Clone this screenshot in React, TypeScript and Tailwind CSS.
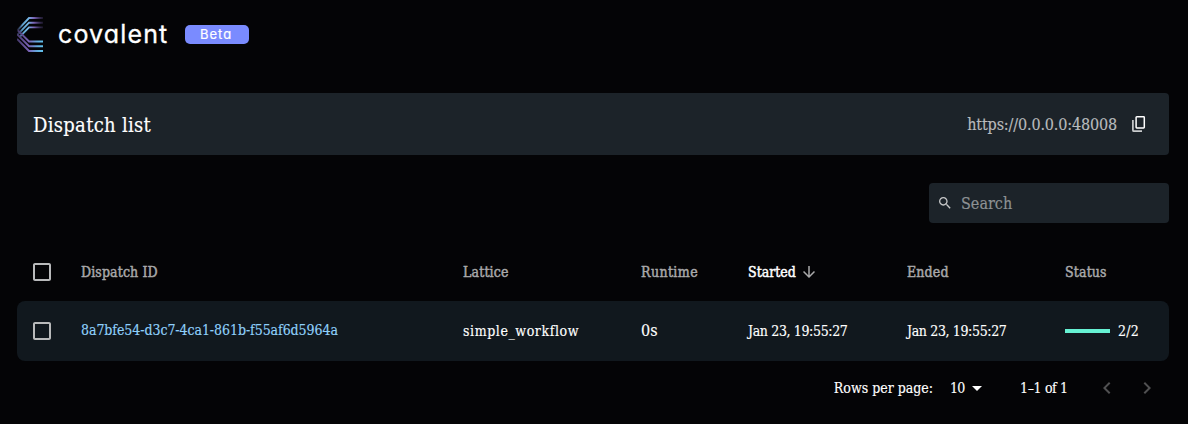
import React from "react";

const slab = "font-['Roboto_Slab','DejaVu_Serif_Condensed','DejaVu_Serif',serif]";

const columns = "grid grid-cols-[64px_382px_178px_107px_159px_158px_104px] items-center";

function Checkbox() {
  return (
    <svg viewBox="0 0 24 24" className="ml-[13px] size-6 fill-[#b9babb]">
      <path d="M19 5v14H5V5h14m0-2H5c-1.1 0-2 .9-2 2v14c0 1.1.9 2 2 2h14c1.1 0 2-.9 2-2V5c0-1.1-.9-2-2-2z" />
    </svg>
  );
}

function Icon({ path, className }: { path: string; className: string }) {
  return (
    <svg viewBox="0 0 24 24" className={`shrink-0 ${className}`}>
      <path d={path} />
    </svg>
  );
}

function Logo() {
  return (
    <svg width="26" height="36" viewBox="0 0 26 36" fill="none" strokeWidth="1.9">
      <defs>
        <linearGradient id="top" gradientUnits="userSpaceOnUse" x1="0" y1="0" x2="26" y2="0">
          <stop offset="0" stopColor="#4a4a78" stopOpacity=".4" />
          <stop offset=".2" stopColor="#5b9cc8" />
          <stop offset=".42" stopColor="#74bbe8" />
          <stop offset=".65" stopColor="#7c62b6" />
          <stop offset="1" stopColor="#4a3d70" stopOpacity=".35" />
        </linearGradient>
        <linearGradient id="bottom" gradientUnits="userSpaceOnUse" x1="0" y1="0" x2="26" y2="0">
          <stop offset="0" stopColor="#44386a" />
          <stop offset=".45" stopColor="#7a62b6" />
          <stop offset=".8" stopColor="#62b0e0" />
          <stop offset="1" stopColor="#62c0ec" />
        </linearGradient>
      </defs>
      <g stroke="url(#top)">
        <path d="M0 14.500 12 2H26" />
        <path d="M0 19 12 6.700H26" />
        <path d="M3 20.500 12 11.400H26" />
      </g>
      <g stroke="url(#bottom)">
        <path d="M1 14.500 12 25.500H26" />
        <path d="M0 18.200 12 30.200H26" />
        <path d="M0 23 12 35H26" />
      </g>
    </svg>
  );
}

export default function App() {
  return (
    <div className={`h-[424px] w-[1188px] overflow-hidden bg-[#040406] text-sm whitespace-nowrap text-white [-webkit-text-stroke:0.15px] ${slab}`}>
      <header className="flex h-[93px] items-start pt-[16px] pl-[17px] font-['Inter',sans-serif] [font-feature-settings:'cv11']">
        <Logo />
        <span className="ml-[15px] w-[127px] text-[25px] leading-[36px] tracking-[1.15px] [-webkit-text-stroke:0.3px]">covalent</span>
        <span className="mt-[9px] h-[19px] w-[64px] rounded-[5px] bg-[#7a8bff] pl-[15px] text-[13px] leading-[19px] tracking-[1px] [-webkit-text-stroke:0.2px]">Beta</span>
      </header>

      <main className="ml-[17px] w-[1152px]">
        <section className="flex h-[62px] items-center rounded bg-[#1c2329] pr-[22px] pl-4">
          <h1 className="pt-0.5 text-[20px] tracking-[0.3px]">Dispatch list</h1>
          <span className="ml-auto pt-0.5 text-[16px] tracking-[-0.15px] text-[#b9bbbd]">https://0.0.0.0:48008</span>
          <svg viewBox="0 0 16 18" className="ml-[14px] h-[18px] w-4" fill="none">
            <path d="M1.900 5v10.200q0 1 1 1H11" stroke="#c9cbcd" strokeWidth="1.700" />
            <rect x="5.100" y="1.800" width="8.200" height="11.200" rx=".7" stroke="#fff" strokeWidth="1.500" />
          </svg>
        </section>

        <div className="mt-7 ml-auto flex h-10 w-60 items-center rounded bg-[#1c2329] pl-2 text-[16px] text-[#8d9194]">
          <Icon
            className="mr-2 size-4 fill-[#c5c6c7]"
            path="M15.500 14h-.79l-.28-.27C15.410 12.590 16 11.110 16 9.500 16 5.910 13.090 3 9.500 3S3 5.910 3 9.500 5.910 16 9.500 16c1.610 0 3.090-.59 4.230-1.570l.27.28v.79l5 4.990L20.490 19l-4.990-5zm-6 0C7.010 14 5 11.990 5 9.500S7.010 5 9.500 5 14 7.010 14 9.500 11.990 14 9.500 14z"
          />
          <span className="pt-0.5">Search</span>
        </div>

        <div className={`mt-5 h-[58px] text-[#a9a9aa] [-webkit-text-stroke:0.45px] ${columns}`}>
          <Checkbox />
          <span className="tracking-[0.12px]">Dispatch ID</span>
          <span className="tracking-[0.15px]">Lattice</span>
          <span className="tracking-[0.4px]">Runtime</span>
          <span className="flex items-center gap-1 text-white">
            Started
            <Icon className="size-[18px] fill-[#a9a9aa]" path="M20 12l-1.410-1.410L13 16.170V4h-2v12.170l-5.580-5.590L4 12l8 8 8-8z" />
          </span>
          <span className="tracking-[0.15px]">Ended</span>
          <span className="tracking-[0.15px]">Status</span>
        </div>
        <div className={`h-[60px] rounded-lg bg-[#11181e] ${columns}`}>
          <Checkbox />
          <span className="pb-0.5 tracking-[-0.06px] text-[#8fd0fb]">8a7bfe54-d3c7-4ca1-861b-f55af6d5964a</span>
          <span className="tracking-[0.58px]">simple_workflow</span>
          <span className="text-[16px]">0s</span>
          <span className="tracking-[-0.36px]">Jan 23, 19:55:27</span>
          <span className="tracking-[-0.36px]">Jan 23, 19:55:27</span>
          <span className="flex items-center gap-2 tracking-[0.3px]">
            <i className="h-1 w-[45px] bg-[#66f1d3]" />
            2/2
          </span>
        </div>
        <footer className="flex h-[54px] items-center justify-end pr-[10px]">
          <span>Rows per page:</span>
          <span className="ml-[17px] w-[15px] tracking-[-0.8px]">10</span>
          <Icon className="size-6 fill-white" path="M7 10l5 5 5-5z" />
          <span className="ml-[31px] w-[75px] tracking-[-0.36px]">1–1 of 1</span>
          <Icon className="size-6 fill-[#505051]" path="M15.410 7.410L14 6l-6 6 6 6 1.410-1.410L10.830 12z" />
          <Icon className="ml-4 size-6 fill-[#505051]" path="M10 6L8.590 7.410 13.170 12l-4.580 4.590L10 18l6-6z" />
        </footer>
      </main>
    </div>
  );
}
